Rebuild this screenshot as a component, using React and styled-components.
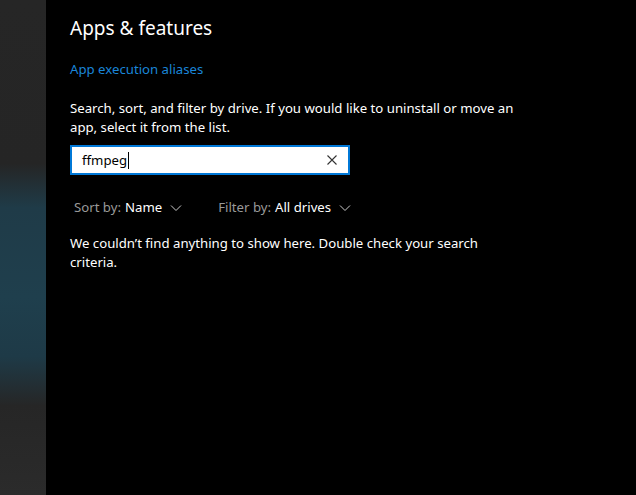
import React from 'react'
import styled, { createGlobalStyle } from 'styled-components'

const GlobalStyle = createGlobalStyle`
  html, body {
    margin: 0;
    padding: 0;
    background: #000;
  }
  body {
    font-family: "Noto Sans", "Open Sans", sans-serif;
    color: #fff;
  }
`

const Window = styled.div`
  display: flex;
  width: 636px;
  height: 495px;
  overflow: hidden;
  background: #000;
`

const Backdrop = styled.div`
  flex: 0 0 46px;
  background: linear-gradient(
    to bottom,
    #262626 0%,
    #252525 33%,
    #1f3b48 42%,
    #1f3f4d 60%,
    #1e3a47 72%,
    #262626 82%,
    #2b2b2b 100%
  );
`

const Content = styled.main`
  flex: 0 0 446px;
  display: flex;
  flex-direction: column;
  align-items: flex-start;
  padding: 14px 0 0 24px;
`

const Title = styled.h1`
  margin: 0;
  font-size: 19px;
  font-weight: 400;
  line-height: 28px;
  color: #fff;
`

const Link = styled.a`
  margin-top: 17px;
  font-size: 13.2px;
  line-height: 20px;
  color: #1a86d9;
  text-decoration: none;
  cursor: pointer;
`

const Paragraph = styled.p`
  margin: ${({ $top }) => $top || 0}px 0 0;
  font-size: 13.2px;
  line-height: 19px;
  color: #fff;
`

const SearchBox = styled.div`
  margin-top: 8px;
  box-sizing: border-box;
  width: 280px;
  height: 30px;
  display: flex;
  align-items: center;
  padding: 0 8px 0 10px;
  background: #fff;
  border: 2px solid #0078d7;
`

const SearchText = styled.span`
  flex: 1;
  font-size: 13.2px;
  color: #000;
  display: flex;
  align-items: center;
`

const Caret = styled.span`
  display: inline-block;
  width: 1px;
  height: 17px;
  margin-left: 1px;
  background: #000;
`

const ClearButton = styled.span`
  display: flex;
  align-items: center;
  justify-content: center;
  width: 16px;
  height: 16px;
`

const Filters = styled.div`
  margin-top: 23px;
  margin-left: 4px;
  display: flex;
  gap: 36px;
`

const Dropdown = styled.div`
  display: flex;
  align-items: center;
  font-size: 13.2px;
  line-height: 19px;
`

const DropLabel = styled.span`
  color: #999;
  margin-right: 4px;
`

const DropValue = styled.span`
  color: #fff;
  margin-right: 8px;
`

const Chevron = () => (
  <svg width="12" height="8" viewBox="0 0 12 8">
    <path d="M1 1.5 L6 6.5 L11 1.5" fill="none" stroke="#ccc" strokeWidth="1" />
  </svg>
)

const CloseIcon = () => (
  <svg width="10" height="10" viewBox="0 0 10 10">
    <path d="M0.5 0.5 L9.5 9.5 M9.5 0.5 L0.5 9.5" stroke="#333" strokeWidth="1.1" />
  </svg>
)

const App = () => (
  <>
    <GlobalStyle />
    <Window>
      <Backdrop />
      <Content>
        <Title>Apps &amp; features</Title>
        <Link>App execution aliases</Link>
        <Paragraph $top={20}>
          Search, sort, and filter by drive. If you would like to uninstall or move an
          app, select it from the list.
        </Paragraph>
        <SearchBox>
          <SearchText>
            ffmpeg
            <Caret />
          </SearchText>
          <ClearButton>
            <CloseIcon />
          </ClearButton>
        </SearchBox>
        <Filters>
          <Dropdown>
            <DropLabel>Sort by:</DropLabel>
            <DropValue>Name</DropValue>
            <Chevron />
          </Dropdown>
          <Dropdown>
            <DropLabel>Filter by:</DropLabel>
            <DropValue>All drives</DropValue>
            <Chevron />
          </Dropdown>
        </Filters>
        <Paragraph $top={17}>
          We couldn’t find anything to show here. Double check your search criteria.
        </Paragraph>
      </Content>
    </Window>
  </>
)

export default App
